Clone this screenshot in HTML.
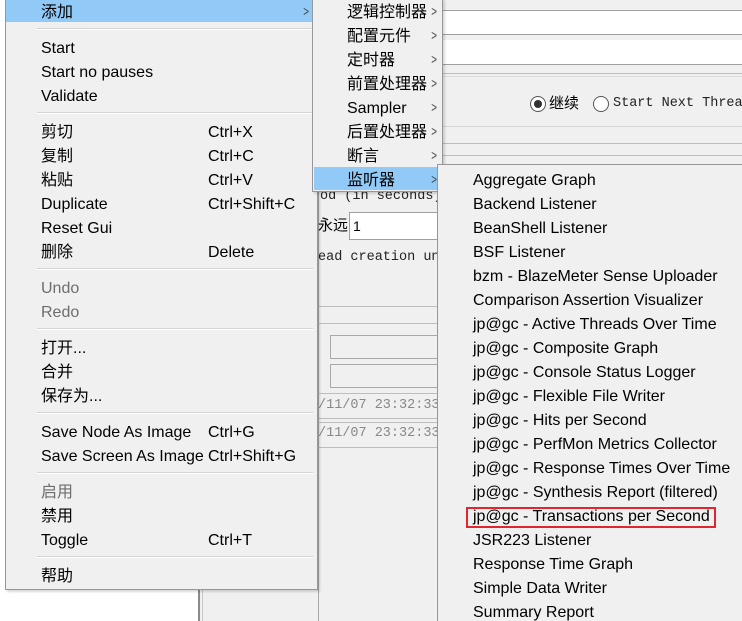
<!DOCTYPE html>
<html><head><meta charset="utf-8"><style>
*{margin:0;padding:0;box-sizing:border-box}
html{overflow:hidden;width:742px;height:621px}
body{width:742px;height:621px;overflow:hidden;background:#f0f0f0;position:relative;font-family:"Liberation Sans","Noto Sans CJK SC",sans-serif;font-size:16px;color:#000}
.a{position:absolute;white-space:nowrap}
.mono{font-family:"Liberation Mono","Noto Sans CJK SC",monospace;font-size:13.5px;color:#222}
.menu{position:absolute;background:#f0f0f0;border:1px solid #979797;box-shadow:2px 2px 2px rgba(0,0,0,.15)}
.it{position:absolute;height:24px;line-height:24px;white-space:nowrap;margin-top:2px}
.hl{position:absolute;background:#91c9f7}
.sep{position:absolute;height:2px;border-top:1px solid #d5d5d5;border-bottom:1px solid #fff}
.dis{color:#6d6d6d}
.arr{position:absolute;font-size:14px;color:#444;transform:scaleX(.7)}
.hl2{position:absolute;height:1px;background:#bdbdbd}
</style></head><body>
<div class="a" style="left:0;top:0;width:200px;height:621px;background:#fff"></div>
<div class="a" style="left:198px;top:0;width:2px;height:621px;background:#8a8a8a"></div>
<div class="a" style="left:202px;top:0;width:1px;height:621px;background:#c8c8c8"></div>
<div class="a" style="left:443px;top:10px;width:299px;height:1px;background:#a0a0a0"></div>
<div class="a" style="left:443px;top:11px;width:299px;height:23px;background:#fff"></div>
<div class="a" style="left:443px;top:34px;width:299px;height:1px;background:#a0a0a0"></div>
<div class="a" style="left:443px;top:40px;width:299px;height:24px;background:#fff"></div>
<div class="a" style="left:443px;top:64px;width:299px;height:1px;background:#a0a0a0"></div>
<div class="hl2" style="left:443px;top:73px;width:299px"></div>
<div class="hl2" style="left:443px;top:76px;width:299px;background:#ddd"></div>
<div class="a" style="left:530px;top:96px;width:16px;height:16px;border:1px solid #555;border-radius:50%;background:#fff"></div>
<div class="a" style="left:534px;top:100px;width:8px;height:8px;border-radius:50%;background:#333"></div>
<div class="a" style="left:549px;top:93px;line-height:22px;font-size:15px">继续</div>
<div class="a" style="left:593px;top:96px;width:16px;height:16px;border:1px solid #555;border-radius:50%;background:#fff"></div>
<div class="a mono" style="left:613px;top:94px;line-height:20px">Start Next Threa</div>
<div class="hl2" style="left:443px;top:126px;width:299px;background:#d5d5d5"></div>
<div class="hl2" style="left:443px;top:143px;width:299px"></div>
<div class="hl2" style="left:443px;top:155px;width:299px"></div>
<div class="a" style="left:318px;top:190px;width:1px;height:431px;background:#a8a8a8"></div>
<div class="a mono" style="left:320px;top:187px;line-height:20px">od (in seconds)</div>
<div class="a" style="left:318px;top:216px;line-height:20px;font-size:15px">永远</div>
<div class="a" style="left:349px;top:212px;width:92px;height:28px;background:#fff;border:1px solid #a0a0a0"></div>
<div class="a" style="left:353px;top:216px;line-height:20px;font-size:14px">1</div>
<div class="a mono" style="left:318px;top:248px;line-height:20px">ead creation un</div>
<div class="hl2" style="left:318px;top:306px;width:122px"></div>
<div class="hl2" style="left:318px;top:323px;width:122px"></div>
<div class="a" style="left:330px;top:335px;width:112px;height:24px;border:1px solid #a8a8a8"></div>
<div class="a" style="left:330px;top:364px;width:112px;height:24px;border:1px solid #a8a8a8"></div>
<div class="hl2" style="left:318px;top:393px;width:122px"></div>
<div class="a mono" style="left:318px;top:396px;line-height:20px;color:#888">/11/07 23:32:33</div>
<div class="hl2" style="left:318px;top:418px;width:122px"></div>
<div class="hl2" style="left:318px;top:422px;width:122px"></div>
<div class="a mono" style="left:318px;top:424px;line-height:20px;color:#888">/11/07 23:32:33</div>
<div class="hl2" style="left:318px;top:447px;width:122px"></div>

<div class="menu" style="left:5px;top:-2px;width:313px;height:592px"></div>
<div class="hl" style="left:6px;top:0;width:311px;height:22px"></div>
<div class="it" style="left:41px;top:-1px">添加</div><div class="arr" style="left:302px;top:3px">&gt;</div>
<div class="sep" style="left:37px;top:28px;width:276px"></div>
<div class="it" style="left:41px;top:35px">Start</div>
<div class="it" style="left:41px;top:59px">Start no pauses</div>
<div class="it" style="left:41px;top:83px">Validate</div>
<div class="sep" style="left:37px;top:112px;width:276px"></div>
<div class="it" style="left:41px;top:119px">剪切</div><div class="it" style="left:208px;top:119px">Ctrl+X</div>
<div class="it" style="left:41px;top:143px">复制</div><div class="it" style="left:208px;top:143px">Ctrl+C</div>
<div class="it" style="left:41px;top:167px">粘贴</div><div class="it" style="left:208px;top:167px">Ctrl+V</div>
<div class="it" style="left:41px;top:191px">Duplicate</div><div class="it" style="left:208px;top:191px">Ctrl+Shift+C</div>
<div class="it" style="left:41px;top:215px">Reset Gui</div>
<div class="it" style="left:41px;top:239px">删除</div><div class="it" style="left:208px;top:239px">Delete</div>
<div class="sep" style="left:37px;top:268px;width:276px"></div>
<div class="it dis" style="left:41px;top:275px">Undo</div>
<div class="it dis" style="left:41px;top:299px">Redo</div>
<div class="sep" style="left:37px;top:328px;width:276px"></div>
<div class="it" style="left:41px;top:335px">打开...</div>
<div class="it" style="left:41px;top:359px">合并</div>
<div class="it" style="left:41px;top:383px">保存为...</div>
<div class="sep" style="left:37px;top:412px;width:276px"></div>
<div class="it" style="left:41px;top:419px">Save Node As Image</div><div class="it" style="left:208px;top:419px">Ctrl+G</div>
<div class="it" style="left:41px;top:443px">Save Screen As Image</div><div class="it" style="left:208px;top:443px">Ctrl+Shift+G</div>
<div class="sep" style="left:37px;top:472px;width:276px"></div>
<div class="it dis" style="left:41px;top:479px">启用</div>
<div class="it" style="left:41px;top:503px">禁用</div>
<div class="it" style="left:41px;top:527px">Toggle</div><div class="it" style="left:208px;top:527px">Ctrl+T</div>
<div class="sep" style="left:37px;top:556px;width:276px"></div>
<div class="it" style="left:41px;top:563px">帮助</div>

<div class="menu" style="left:312px;top:-2px;width:131px;height:194px"></div>
<div class="hl" style="left:314px;top:167px;width:124px;height:23px"></div>
<div class="it" style="left:347px;top:-1px">逻辑控制器</div><div class="arr" style="left:430px;top:3px">&gt;</div>
<div class="it" style="left:347px;top:23px">配置元件</div><div class="arr" style="left:430px;top:27px">&gt;</div>
<div class="it" style="left:347px;top:47px">定时器</div><div class="arr" style="left:430px;top:51px">&gt;</div>
<div class="it" style="left:347px;top:71px">前置处理器</div><div class="arr" style="left:430px;top:75px">&gt;</div>
<div class="it" style="left:347px;top:95px">Sampler</div><div class="arr" style="left:430px;top:99px">&gt;</div>
<div class="it" style="left:347px;top:119px">后置处理器</div><div class="arr" style="left:430px;top:123px">&gt;</div>
<div class="it" style="left:347px;top:143px">断言</div><div class="arr" style="left:430px;top:147px">&gt;</div>
<div class="it" style="left:347px;top:167px">监听器</div><div class="arr" style="left:430px;top:171px">&gt;</div>

<div class="menu" style="left:437px;top:164px;width:320px;height:470px"></div>
<div class="it" style="left:473px;top:167px">Aggregate Graph</div>
<div class="it" style="left:473px;top:191px">Backend Listener</div>
<div class="it" style="left:473px;top:215px">BeanShell Listener</div>
<div class="it" style="left:473px;top:239px">BSF Listener</div>
<div class="it" style="left:473px;top:263px">bzm - BlazeMeter Sense Uploader</div>
<div class="it" style="left:473px;top:287px">Comparison Assertion Visualizer</div>
<div class="it" style="left:473px;top:311px">jp@gc - Active Threads Over Time</div>
<div class="it" style="left:473px;top:335px">jp@gc - Composite Graph</div>
<div class="it" style="left:473px;top:359px">jp@gc - Console Status Logger</div>
<div class="it" style="left:473px;top:383px">jp@gc - Flexible File Writer</div>
<div class="it" style="left:473px;top:407px">jp@gc - Hits per Second</div>
<div class="it" style="left:473px;top:431px">jp@gc - PerfMon Metrics Collector</div>
<div class="it" style="left:473px;top:455px">jp@gc - Response Times Over Time</div>
<div class="it" style="left:473px;top:479px">jp@gc - Synthesis Report (filtered)</div>
<div class="it" style="left:473px;top:503px">jp@gc - Transactions per Second</div>
<div class="a" style="left:466px;top:507px;width:250px;height:21px;border:2px solid #e0262f"></div>
<div class="it" style="left:473px;top:527px">JSR223 Listener</div>
<div class="it" style="left:473px;top:551px">Response Time Graph</div>
<div class="it" style="left:473px;top:575px">Simple Data Writer</div>
<div class="it" style="left:473px;top:599px">Summary Report</div>
</body></html>
